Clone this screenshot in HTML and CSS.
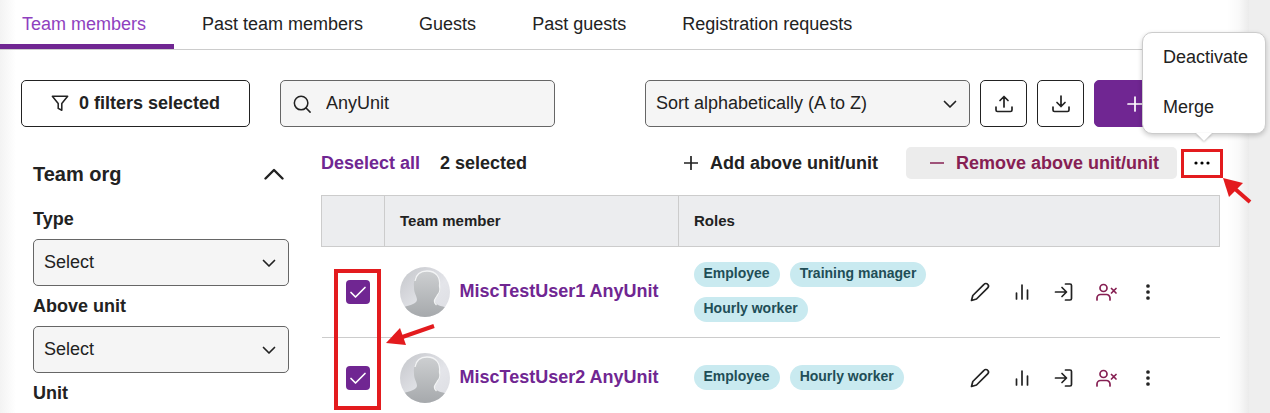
FILE: index.html
```html
<!DOCTYPE html>
<html lang="en">
<head>
  <meta charset="UTF-8" />
  <meta name="viewport" content="width=device-width, initial-scale=1.0" />
  <title>Team members</title>
  <link rel="stylesheet" href="styles.css">
</head>
<body>
  <!-- shared icons -->
  <svg class="sprite" width="0" height="0" aria-hidden="true">
    <defs>
      <linearGradient id="avatarBg" x1="0" y1="0" x2="1" y2="1">
        <stop offset="0" stop-color="#c4c6ca" />
        <stop offset="0.6" stop-color="#e4e5ea" />
        <stop offset="1" stop-color="#dcdde2" />
      </linearGradient>
      <linearGradient id="avatarFg" x1="0" y1="0" x2="0" y2="1">
        <stop offset="0" stop-color="#cdcfd1" />
        <stop offset="1" stop-color="#a6a9ac" />
      </linearGradient>
      <clipPath id="avatarClip"><circle cx="25" cy="25" r="25" /></clipPath>
    </defs>
    <symbol id="chevron" viewBox="0 0 14 14"><path d="M1.5 4.5 7 10l5.500-5.500" /></symbol>
    <symbol id="tick" viewBox="0 0 24 24"><path d="M5 12.500 9.500 17 19 7.500" /></symbol>
    <symbol id="pencil" viewBox="0 0 20 20"><path d="M1.500 18.500 2.800 13.500 14 2.300a2.500 2.500 0 0 1 3.700 0 2.500 2.500 0 0 1 0 3.500L6.500 17 1.500 18.500Z" /></symbol>
    <symbol id="chart" viewBox="0 0 20 20"><path d="M4.500 11v6M10 3v14M15.500 8v9" /></symbol>
    <symbol id="login" viewBox="0 0 20 20"><path d="M1.500 10H12M8 5.500l4.500 4.500L8 14.500M11.500 2H16a1.500 1.500 0 0 1 1.500 1.500v13A1.500 1.500 0 0 1 16 18h-4.500" /></symbol>
    <symbol id="userx" viewBox="0 0 22 20"><circle cx="8.500" cy="6" r="3.500" /><path d="M2 18v-2a3.500 3.500 0 0 1 3.500-3.500h6A3.500 3.500 0 0 1 15 16v2M16.500 6.500l4.500 4.500M21 6.500 16.500 11" /></symbol>
    <symbol id="dots" viewBox="0 0 20 20"><circle cx="10" cy="4" r="1" /><circle cx="10" cy="10" r="1" /><circle cx="10" cy="16" r="1" /></symbol>
    <symbol id="avatar" viewBox="0 0 50 50">
      <g clip-path="url(#avatarClip)">
        <rect width="50" height="50" fill="url(#avatarBg)" />
        <path d="M0 42C7 38 16 38 17 33c0-4-3-7-3-12C13 10 17 4 27 4s14 6 13 16c1 3 0 6-2 8-1 3-4 4-3 7 1 4 9 4 15 7v8H0Z" fill="url(#avatarFg)" stroke="none" />
        <path d="M15 14C16 8 20 4 27 4c9 0 13.500 6 12.500 15 1 4 0 7-2 9-1 3-4 4-3 7 0 1 1 2 2 3" fill="none" stroke="#f3f4f5" stroke-width="1.300" />
      </g>
    </symbol>
  </svg>

  <div class="panel">
    <nav class="tabs">
      <a class="tab active" href="#">Team members</a>
      <a class="tab" href="#">Past team members</a>
      <a class="tab" href="#">Guests</a>
      <a class="tab" href="#">Past guests</a>
      <a class="tab" href="#">Registration requests</a>
    </nav>

    <div class="toolbar">
      <button class="btn filters">
        <svg class="icon" width="18" height="18" viewBox="0 0 20 20"><path d="M1.500 2.500h17L12 10.500V18l-4-2v-5.500L1.500 2.500Z" /></svg>
        0 filters selected
      </button>
      <div class="search">
        <svg class="icon" width="18" height="18" viewBox="0 0 20 20"><circle cx="9" cy="9" r="7.500" /><path d="m14.500 14.500 4.500 4.500" /></svg>
        <input type="text" value="AnyUnit" aria-label="Search team members">
      </div>
      <div class="select sort">
        <select aria-label="Sort">
          <option>Sort alphabetically (A to Z)</option>
        </select>
        <svg class="icon" width="14" height="14"><use href="#chevron" /></svg>
      </div>
      <button class="btn square" aria-label="Upload">
        <svg class="icon" width="20" height="20" viewBox="0 0 20 20"><path d="M10 13V2.500M6 6.500l4-4 4 4M2 13v3a1.500 1.500 0 0 0 1.500 1.500h13A1.500 1.500 0 0 0 18 16v-3" /></svg>
      </button>
      <button class="btn square" aria-label="Download">
        <svg class="icon" width="20" height="20" viewBox="0 0 20 20"><path d="M10 2v10.500M6 8.500l4 4 4-4M2 13v3a1.500 1.500 0 0 0 1.500 1.500h13A1.500 1.500 0 0 0 18 16v-3" /></svg>
      </button>
      <button class="btn add" aria-label="Add">
        <svg class="icon" width="16" height="16" viewBox="0 0 16 16"><path d="M8 1v14M1 8h14" /></svg>
      </button>
    </div>

    <div class="content">
      <aside class="sidebar">
        <button class="group">
          Team org
          <svg class="icon" width="20" height="20" viewBox="0 0 20 20"><path d="M1.500 14.500 10 6l8.500 8.500" /></svg>
        </button>
        <label for="type">Type</label>
        <div class="select">
          <select id="type"><option>Select</option></select>
          <svg class="icon" width="14" height="14"><use href="#chevron" /></svg>
        </div>
        <label for="aboveUnit">Above unit</label>
        <div class="select">
          <select id="aboveUnit"><option>Select</option></select>
          <svg class="icon" width="14" height="14"><use href="#chevron" /></svg>
        </div>
        <label for="unit">Unit</label>
        <div class="select">
          <select id="unit"><option>Select</option></select>
          <svg class="icon" width="14" height="14"><use href="#chevron" /></svg>
        </div>
      </aside>

      <main class="main">
        <div class="actions">
          <button class="link">Deselect all</button>
          <span class="count">2 selected</span>
          <button class="action">
            <svg class="icon" width="14" height="14" viewBox="0 0 14 14"><path d="M7 .500v13M.500 7h13" /></svg>
            Add above unit/unit
          </button>
          <button class="action remove">
            <svg class="icon" width="14" height="14" viewBox="0 0 14 14"><path d="M.500 7h13" /></svg>
            Remove above unit/unit
          </button>
          <div class="more">
            <button class="more-btn" aria-label="More actions">
              <svg width="16" height="16" viewBox="0 0 16 16"><circle cx="2" cy="8" r="1.600" /><circle cx="8" cy="8" r="1.600" /><circle cx="14" cy="8" r="1.600" /></svg>
            </button>
            <div class="menu">
              <button>Deactivate</button>
              <button>Merge</button>
            </div>
            <svg class="arrow arrow-more" width="30" height="28" viewBox="0 0 30 28"><path d="M0 0 20 5 6 19Z" /><path class="shaft" d="m11 10 16 14" /></svg>
          </div>
        </div>

        <div class="table-wrap">
          <table>
            <colgroup>
              <col class="col-check">
              <col class="col-name">
              <col>
              <col class="col-tools">
            </colgroup>
            <thead>
              <tr>
                <th></th>
                <th>Team member</th>
                <th colspan="2">Roles</th>
              </tr>
            </thead>
            <tbody>
              <tr class="tall">
                <td>
                  <span class="check">
                    <input type="checkbox" aria-label="Select MiscTestUser1 AnyUnit" checked>
                    <svg class="icon" width="24" height="24"><use href="#tick" /></svg>
                  </span>
                </td>
                <td>
                  <div class="member">
                    <svg width="50" height="50"><use href="#avatar" /></svg>
                    <a href="#">MiscTestUser1 AnyUnit</a>
                  </div>
                </td>
                <td>
                  <div class="roles">
                    <span class="role">Employee</span>
                    <span class="role">Training manager</span>
                    <span class="role">Hourly worker</span>
                  </div>
                </td>
                <td>
                  <div class="tools">
                    <button aria-label="Edit"><svg class="icon" width="20" height="20"><use href="#pencil" /></svg></button>
                    <button aria-label="Report"><svg class="icon" width="20" height="20"><use href="#chart" /></svg></button>
                    <button aria-label="Log in as"><svg class="icon" width="20" height="20"><use href="#login" /></svg></button>
                    <button class="danger" aria-label="Deactivate"><svg class="icon" width="22" height="20"><use href="#userx" /></svg></button>
                    <button aria-label="More"><svg class="icon" width="20" height="20"><use href="#dots" /></svg></button>
                  </div>
                </td>
              </tr>
              <tr>
                <td>
                  <span class="check">
                    <input type="checkbox" aria-label="Select MiscTestUser2 AnyUnit" checked>
                    <svg class="icon" width="24" height="24"><use href="#tick" /></svg>
                  </span>
                </td>
                <td>
                  <div class="member">
                    <svg width="50" height="50"><use href="#avatar" /></svg>
                    <a href="#">MiscTestUser2 AnyUnit</a>
                  </div>
                </td>
                <td>
                  <div class="roles">
                    <span class="role">Employee</span>
                    <span class="role">Hourly worker</span>
                  </div>
                </td>
                <td>
                  <div class="tools">
                    <button aria-label="Edit"><svg class="icon" width="20" height="20"><use href="#pencil" /></svg></button>
                    <button aria-label="Report"><svg class="icon" width="20" height="20"><use href="#chart" /></svg></button>
                    <button aria-label="Log in as"><svg class="icon" width="20" height="20"><use href="#login" /></svg></button>
                    <button class="danger" aria-label="Deactivate"><svg class="icon" width="22" height="20"><use href="#userx" /></svg></button>
                    <button aria-label="More"><svg class="icon" width="20" height="20"><use href="#dots" /></svg></button>
                  </div>
                </td>
              </tr>
            </tbody>
          </table>
          <div class="highlight"></div>
          <svg class="arrow arrow-check" width="50" height="24" viewBox="0 0 50 24"><path d="M0 19 14 4 20 21Z" /><path class="shaft" d="M15 13.500 48 2" /></svg>
        </div>
      </main>
    </div>
  </div>
</body>
</html>
```
FILE: styles.css
```css
* {
  box-sizing: border-box;
}

body {
  margin: 0;
  height: 100vh;
  overflow: hidden;
  font-family: "Liberation Sans", Arial, sans-serif;
  font-size: 18px;
  line-height: 24px;
  color: #222;
  background: #eee;
}

button, input, select {
  font: inherit;
  color: inherit;
}

button {
  padding: 0;
  border: none;
  background: none;
  cursor: pointer;
}

.sprite {
  position: absolute;
}

.icon {
  flex: none;
  fill: none;
  stroke: currentColor;
  stroke-width: 1.7;
  stroke-linecap: round;
  stroke-linejoin: round;
}

.panel {
  min-height: 100vh;
  margin-right: 21px;
  padding-right: 29px;
  background: linear-gradient(to right, #f3f3f3, #fff 16px, #fff calc(100% - 22px), #f9f9f9 calc(100% - 10px), #ebebeb);
}

/* tabs */
.tabs {
  display: flex;
  height: 50px;
  border-bottom: 1px solid #ccc;
}

.tab {
  height: 49px;
  padding: 12px 28px 0;
  color: #222;
  text-decoration: none;
}

.tab.active {
  padding-left: 22px;
  color: #8f3fbf;
  border-bottom: 5px solid #702692;
}

/* toolbar */
.toolbar {
  display: flex;
  gap: 10px;
  padding: 30px 0 0 21px;
}

.btn {
  display: flex;
  align-items: center;
  justify-content: center;
  gap: 10px;
  height: 47px;
  border: 1px solid #222;
  border-radius: 5px;
  background: #fff;
  font-weight: bold;
}

.filters {
  width: 229px;
  margin-right: 20px;
  padding-bottom: 2px;
}

.search {
  display: flex;
  align-items: center;
  gap: 15px;
  width: 275px;
  height: 47px;
  padding: 0 12px;
  border: 1px solid #666;
  border-radius: 5px;
  background: #f5f5f5;
}

.search input {
  flex: 1;
  min-width: 0;
  padding: 0 0 2px;
  border: none;
  outline: none;
  background: none;
}

.select {
  display: grid;
  align-items: center;
}

.select > * {
  grid-area: 1 / 1;
}

.select select {
  width: 100%;
  height: 47px;
  padding: 0 36px 2px 10px;
  appearance: none;
  border: 1px solid #666;
  border-radius: 5px;
  background: #f5f5f5;
}

.select .icon {
  justify-self: end;
  margin-right: 13px;
  pointer-events: none;
}

.sort {
  width: 325px;
  margin-left: auto;
}

.square {
  width: 47px;
}

.add {
  width: 126px;
  padding-right: 44px;
  border-color: #702692;
  background: #702692;
  color: #fff;
}

/* sidebar */
.content {
  display: flex;
  gap: 32px;
  padding: 20px 0 0 33px;
}

.sidebar {
  width: 256px;
  flex: none;
}

.group {
  display: flex;
  align-items: center;
  justify-content: space-between;
  width: 100%;
  height: 52px;
  padding: 2px 5px 0 0;
  font-size: 20px;
  font-weight: bold;
}

.group .icon {
  stroke-width: 2.4;
}

.sidebar label {
  display: block;
  height: 40px;
  line-height: 40px;
  font-weight: bold;
}

/* selection actions */
.main {
  flex: 1;
  min-width: 0;
}

.actions {
  display: flex;
  align-items: center;
  height: 32px;
  margin-right: -3px;
}

.link {
  margin-right: 20px;
  font-weight: bold;
  color: #702692;
}

.count {
  margin-right: auto;
  font-weight: bold;
}

.action {
  display: flex;
  align-items: center;
  gap: 12px;
  height: 32px;
  margin-right: 28px;
  font-weight: bold;
}

.remove {
  margin-right: 4px;
  padding: 0 18px 0 24px;
  border-radius: 5px;
  background: #ececec;
  color: #862053;
}

.more {
  position: relative;
}

.more-btn {
  display: flex;
  align-items: center;
  justify-content: center;
  width: 42px;
  height: 29px;
  border: 3px solid #e31b1e;
}

.menu {
  position: absolute;
  right: -43px;
  bottom: 44px;
  width: 124px;
  border: 1px solid #ccc;
  border-radius: 10px;
  background: #fff;
  box-shadow: 0 2px 5px rgba(0, 0, 0, 0.2);
}

.menu::after {
  content: "";
  position: absolute;
  top: 100%;
  left: 53px;
  border: 8px solid transparent;
  border-top-color: #fff;
  border-bottom: none;
  filter: drop-shadow(0 1px 1px rgba(0, 0, 0, 0.25));
}

.menu button {
  display: block;
  width: 100%;
  height: 50px;
  padding: 0 0 2px 20px;
  text-align: left;
}

.arrow {
  position: absolute;
  fill: #e31b1e;
}

.arrow .shaft {
  fill: none;
  stroke: #e31b1e;
  stroke-width: 4;
}

.arrow-more {
  left: 42px;
  top: 29px;
}

/* table */
.table-wrap {
  position: relative;
  margin-top: 16px;
}

table {
  width: 100%;
  table-layout: fixed;
  border-collapse: collapse;
}

.col-check {
  width: 63px;
}

.col-name {
  width: 294px;
}

.col-tools {
  width: 275px;
}

th {
  height: 51px;
  padding: 0 15px;
  border: 1px solid #ccc;
  background: #ecedef;
  font-size: 15px;
  text-align: left;
}

td {
  height: 80px;
  padding: 0 15px;
  border-bottom: 1px solid #ccc;
}

.tall td {
  height: 91px;
}

.check {
  display: grid;
  width: 24px;
  margin-left: 9px;
}

.check > * {
  grid-area: 1 / 1;
}

.check input {
  width: 24px;
  height: 24px;
  margin: 0;
  appearance: none;
  border-radius: 4px;
  background: #702692;
}

.check .icon {
  color: #fff;
  pointer-events: none;
}

.member {
  display: flex;
  align-items: center;
  gap: 10px;
}

.member a {
  padding-bottom: 2px;
  color: #702692;
  font-weight: bold;
  text-decoration: none;
  white-space: nowrap;
}

.roles {
  display: flex;
  flex-wrap: wrap;
  gap: 10px;
}

.role {
  height: 25px;
  padding: 0 10px;
  border-radius: 13px;
  background: #c9eaf0;
  color: #1f4e57;
  font-size: 14px;
  font-weight: bold;
  line-height: 23px;
}

.tools {
  display: flex;
}

.tools button {
  display: flex;
  justify-content: center;
  width: 42px;
}

.tools .danger {
  color: #862053;
}

.highlight {
  position: absolute;
  left: 13px;
  top: 74px;
  width: 47px;
  height: 141px;
  border: 4px solid #e31b1e;
  pointer-events: none;
}

.arrow-check {
  left: 65px;
  top: 129px;
}
```
